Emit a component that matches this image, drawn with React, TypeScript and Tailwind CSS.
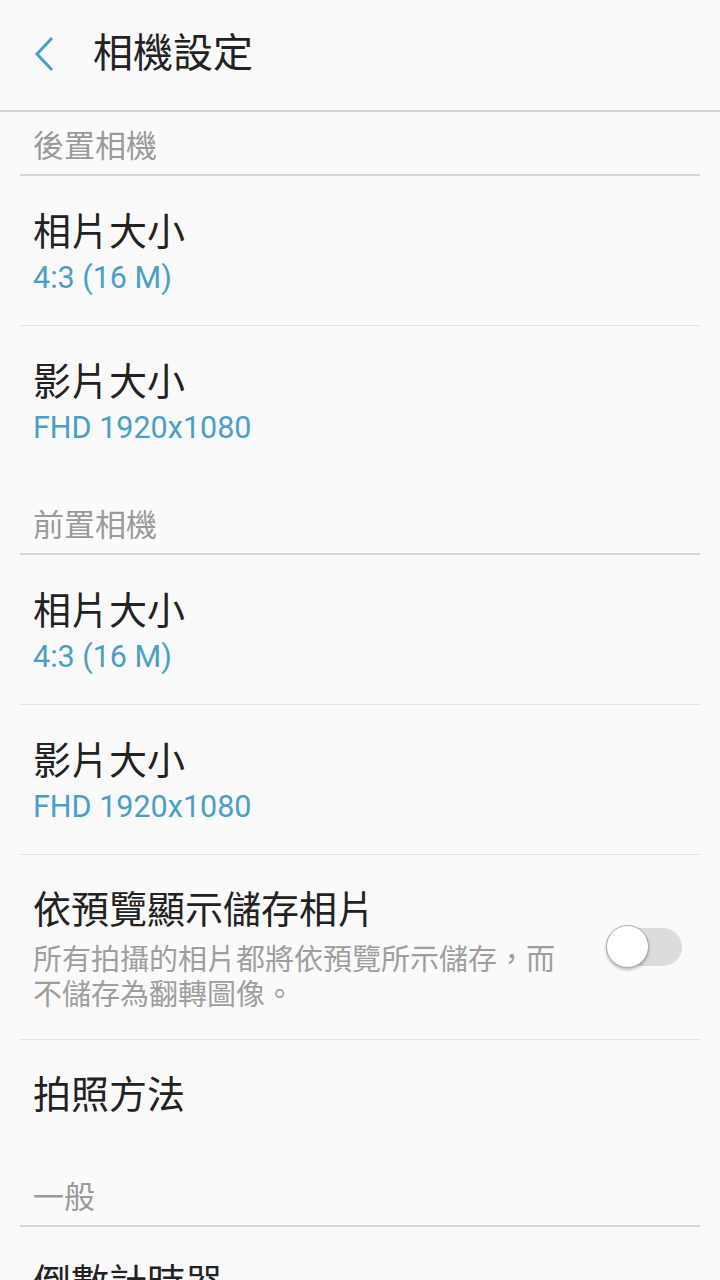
import React from "react";

const font = "font-['Roboto','Noto_Sans_CJK_TC',sans-serif]";

function SectionHeader({ label, top }: { label: string; top: string }) {
  return (
    <div className={`mx-[20px] border-b-2 border-[#d6d6d6] px-[13px] pb-[9px] ${top}`}>
      <div className="text-[31px] leading-[36px] text-[#9a9a9a]">{label}</div>
    </div>
  );
}

function Item({
  title,
  value,
  divider = true,
}: {
  title: string;
  value?: string;
  divider?: boolean;
}) {
  return (
    <div className={`mx-[20px] px-[13px] ${divider ? "border-b border-[#e6e6e6]" : ""} ${value ? "pt-[34px] pb-[23px]" : "pt-[33px] pb-[32px]"}`}>
      <div className="text-[38px] leading-[44px] text-[#222222]">{title}</div>
      {value && <div className="text-[30.5px] leading-[48px] text-[#4a9fc5]">{value}</div>}
    </div>
  );
}

function Toggle() {
  return (
    <div className="relative -mt-[8px] h-[44px] w-[76px] shrink-0">
      <div className="absolute left-[4px] top-[3px] h-[38px] w-[72px] rounded-full bg-[#dcdcdc]" />
      <div className="absolute left-0 top-0 h-[43px] w-[43px] rounded-full border border-[#a8a8a8] bg-white shadow-[0_2px_3px_rgba(0,0,0,0.25)]" />
    </div>
  );
}

export default function App() {
  return (
    <div className={`min-h-[1280px] w-[720px] overflow-hidden bg-[#fafafa] ${font}`}>
      <header className="flex h-[112px] items-center border-b-2 border-[#d4d4d4] pb-[2px]">
        <div className="flex w-[93px] justify-start pl-[34px]">
          <svg width="22" height="36" viewBox="0 0 22 36" fill="none">
            <path d="M18 2 L3 18 L18 34" stroke="#4a9fc5" strokeWidth="3" />
          </svg>
        </div>
        <h1 className="text-[40px] leading-[48px] text-[#222222]">相機設定</h1>
      </header>

      <SectionHeader label="後置相機" top="pt-[17px]" />
      <Item title="相片大小" value="4:3 (16 M)" />
      <Item title="影片大小" value="FHD 1920x1080" divider={false} />

      <SectionHeader label="前置相機" top="pt-[33px]" />
      <Item title="相片大小" value="4:3 (16 M)" />
      <Item title="影片大小" value="FHD 1920x1080" />

      <div className="mx-[20px] flex items-center gap-[40px] border-b border-[#e6e6e6] pb-[26px] pl-[13px] pr-[18px] pt-[33px]">
        <div className="flex-1">
          <div className="text-[38px] leading-[44px] text-[#222222]">依預覽顯示儲存相片</div>
          <div className="mt-[11px] text-[29px] leading-[35px] text-[#9e9e9e]">
            所有拍攝的相片都將依預覽所示儲存，而不儲存為翻轉圖像。
          </div>
        </div>
        <Toggle />
      </div>

      <Item title="拍照方法" divider={false} />

      <SectionHeader label="一般" top="pt-[31px]" />
      <Item title="倒數計時器" value="關閉" />
    </div>
  );
}
